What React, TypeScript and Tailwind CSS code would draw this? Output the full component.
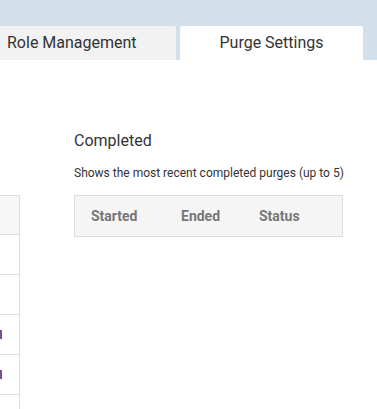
import React from 'react';

const App = () => {
    const leftRows = [0, 1, 2, 3, 4];
    return (
        <div className="w-[377px] h-[409px] overflow-hidden bg-white font-['Roboto',sans-serif] text-[#333]">
            <header className="h-[60px] bg-[#d3dfe9] flex items-end">
                <div className="w-[176px] h-[34px] bg-[#f2f2f2] rounded-tr-[2px] flex items-center pl-[7px] text-[16px]">
                    Role Management
                </div>
                <div className="ml-[4px] w-[183px] h-[34px] bg-white rounded-t-[2px] flex items-center justify-center text-[16px]">
                    Purge Settings
                </div>
            </header>

            <div className="flex">
                <section className="w-[20px] mt-[135px] border-r border-[#ddd]">
                    <div className="h-[40px] bg-[#f7f7f7] border-t border-b border-[#ddd]" />
                    {leftRows.map((i) => (
                        <div key={i} className="h-[40px] border-b border-[#ddd] flex items-center">
                            {(i === 2 || i === 3) && <span className="w-[2px] h-[9px] bg-[#7a4e8c]" />}
                        </div>
                    ))}
                </section>

                <section className="ml-[54px] w-[269px] pt-[70px]">
                    <h2 className="text-[16px] leading-[22px]">Completed</h2>
                    <p className="text-[12px] leading-[16px] mt-[13px] whitespace-nowrap">
                        Shows the most recent completed purges (up to 5)
                    </p>
                    <div className="mt-[14px] h-[42px] bg-[#f5f5f5] border border-[#ddd] flex items-center text-[14px] font-bold text-[#777]">
                        <span className="w-[90px] pl-[16px]">Started</span>
                        <span className="w-[78px] pl-[16px]">Ended</span>
                        <span className="pl-[16px]">Status</span>
                    </div>
                </section>
            </div>
        </div>
    );
};

export default App;
